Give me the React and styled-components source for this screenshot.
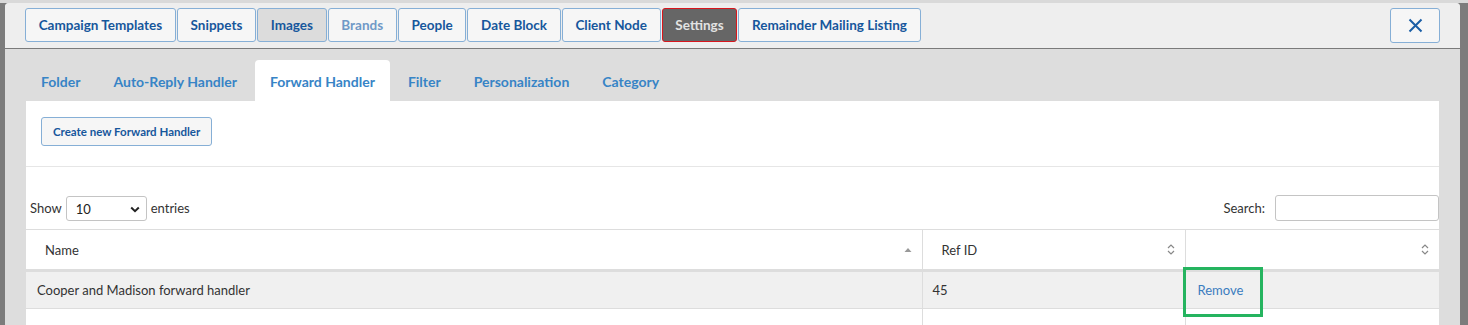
import React from 'react'
import styled, { createGlobalStyle } from 'styled-components'

const GlobalStyle = createGlobalStyle`
  html, body {
    margin: 0;
    padding: 0;
    background: #7c7c7c;
  }
  body {
    font-family: Lato, "Liberation Sans", sans-serif;
    font-size: 13px;
    color: #333;
  }
  * { box-sizing: border-box; }
`

const Backdrop = styled.div`
  height: 325px;
  padding: 3px 8px 0 5px;
  background: linear-gradient(#d9d9d9 0 3px, #7c7c7c 3px);
  overflow: hidden;
`

const Modal = styled.div`
  height: 100%;
  background: #dddddd;
  border-radius: 4px 4px 0 0;
  overflow: hidden;
`

const Header = styled.div`
  height: 46px;
  padding: 5px 20px 0 20px;
  display: flex;
  align-items: flex-start;
  background: #eeeeee;
  border-bottom: 1px solid #7a7a7a;
`

const TopTabs = styled.div`
  display: flex;
  gap: 1px;
  flex: 1;
`

const TopTab = styled.div`
  height: 34px;
  padding: 0 12.7px;
  display: flex;
  align-items: center;
  font-weight: 700;
  font-size: 13.5px;
  border-radius: 3px;
  border: 1px solid ${p => (p.$selected ? '#d8161d' : '#86afd6')};
  background: ${p => (p.$selected ? '#666666' : p.$active ? '#dcdcdc' : '#f6f6f6')};
  color: ${p => (p.$selected ? '#e2e2e2' : p.$disabled ? '#6f99c7' : '#16579c')};
`

const CloseButton = styled.div`
  width: 50px;
  height: 35px;
  border: 1px solid #86afd6;
  border-radius: 3px;
  background: #f6f6f6;
  display: flex;
  align-items: center;
  justify-content: center;
`

const Body = styled.div`
  padding: 11px 21px 0 21px;
`

const SubTabs = styled.div`
  display: flex;
  height: 41px;
`

const SubTab = styled.div`
  padding: 1px 15px 0 15px;
  margin-right: 3px;
  display: flex;
  align-items: center;
  font-weight: 700;
  font-size: 14px;
  color: #3784c6;
  border-radius: 4px 4px 0 0;
  background: ${p => (p.$active ? '#ffffff' : 'transparent')};
`

const Panel = styled.div`
  background: #ffffff;
  height: 240px;
`

const Toolbar = styled.div`
  padding: 16px 15px 20px 15px;
  border-bottom: 1px solid #e6e6e6;
`

const SmallButton = styled.div`
  display: inline-flex;
  align-items: center;
  height: 29px;
  padding: 0 11px;
  border: 1px solid #86afd6;
  border-radius: 3px;
  background: #f6f6f6;
  color: #16579c;
  font-weight: 700;
  font-size: 11.5px;
`

const Controls = styled.div`
  display: flex;
  justify-content: space-between;
  align-items: center;
  padding: 28px 0 8px 4px;
  color: #333;
`

const Label = styled.label`
  display: flex;
  align-items: center;
  gap: 4px;
`

const Select = styled.div`
  width: 81px;
  height: 25px;
  border: 1px solid #c4c4c4;
  border-radius: 3px;
  display: flex;
  align-items: center;
  justify-content: space-between;
  padding: 2px 6px 0 9px;
  color: #222;
`

const SearchInput = styled.div`
  width: 164px;
  height: 26px;
  border: 1px solid #c4c4c4;
  border-radius: 3px;
  margin-left: 6px;
`

const TableWrap = styled.div`
  position: relative;
`

const Table = styled.table`
  width: 100%;
  border-collapse: collapse;
  font-size: 13px;
`

const Th = styled.th`
  height: 41px;
  padding: 0 10px 0 ${p => p.$pad || 19}px;
  text-align: left;
  font-weight: 400;
  color: #333;
  border-top: 1px solid #dddddd;
  border-bottom: 3px solid #dddddd;
  border-left: ${p => (p.$first ? 'none' : '1px solid #dddddd')};
  width: ${p => p.$w || 'auto'};
`

const ThInner = styled.div`
  display: flex;
  align-items: center;
  justify-content: space-between;
`

const Td = styled.td`
  height: ${p => p.$h || 38}px;
  padding: 0 10px 0 ${p => p.$pad || 10}px;
  background: ${p => (p.$striped ? '#f0f0f0' : '#ffffff')};
  border-bottom: 1px solid #dddddd;
  border-left: ${p => (p.$first ? 'none' : '1px solid #dddddd')};
  color: #333;
`

const LinkText = styled.span`
  color: #3b7cbf;
`

const Highlight = styled.div`
  position: absolute;
  left: 1157px;
  top: 38px;
  width: 80px;
  height: 50px;
  border: 3px solid #25b45f;
  pointer-events: none;
`

const SortBoth = () => (
  <svg width="8" height="11" viewBox="0 0 8 11">
    <path d="M1 4 L4 1 L7 4 M1 7 L4 10 L7 7" fill="none" stroke="#888" strokeWidth="1.2" />
  </svg>
)

const SortUp = () => (
  <svg width="8" height="6" viewBox="0 0 8 6">
    <path d="M0.5 5 L4 1 L7.5 5 Z" fill="#999" />
  </svg>
)

const Chevron = () => (
  <svg width="10" height="7" viewBox="0 0 10 7">
    <path d="M1.2 1.5 L5 5.2 L8.8 1.5" fill="none" stroke="#222" strokeWidth="2" />
  </svg>
)

const CloseIcon = () => (
  <svg width="15" height="15" viewBox="0 0 15 15">
    <path d="M1.5 1.5 L13.5 13.5 M13.5 1.5 L1.5 13.5" stroke="#1a5ea6" strokeWidth="2" />
  </svg>
)

const topTabs = [
  { label: 'Campaign Templates' },
  { label: 'Snippets' },
  { label: 'Images', active: true },
  { label: 'Brands', disabled: true },
  { label: 'People' },
  { label: 'Date Block' },
  { label: 'Client Node' },
  { label: 'Settings', selected: true },
  { label: 'Remainder Mailing Listing' },
]

const subTabs = ['Folder', 'Auto-Reply Handler', 'Forward Handler', 'Filter', 'Personalization', 'Category']

export default function App() {
  return (
    <>
      <GlobalStyle />
      <Backdrop>
        <Modal>
          <Header>
            <TopTabs>
              {topTabs.map(t => (
                <TopTab key={t.label} $active={t.active} $disabled={t.disabled} $selected={t.selected}>
                  {t.label}
                </TopTab>
              ))}
            </TopTabs>
            <CloseButton>
              <CloseIcon />
            </CloseButton>
          </Header>
          <Body>
            <SubTabs>
              {subTabs.map(s => (
                <SubTab key={s} $active={s === 'Forward Handler'}>
                  {s}
                </SubTab>
              ))}
            </SubTabs>
            <Panel>
              <Toolbar>
                <SmallButton>Create new Forward Handler</SmallButton>
              </Toolbar>
              <Controls>
                <Label>
                  Show
                  <Select>
                    10
                    <Chevron />
                  </Select>
                  entries
                </Label>
                <Label>
                  Search:
                  <SearchInput />
                </Label>
              </Controls>
              <TableWrap>
                <Table>
                  <thead>
                    <tr>
                      <Th $first>
                        <ThInner>
                          Name
                          <SortUp />
                        </ThInner>
                      </Th>
                      <Th $w="263px">
                        <ThInner>
                          Ref ID
                          <SortBoth />
                        </ThInner>
                      </Th>
                      <Th $w="254px">
                        <ThInner>
                          <span />
                          <SortBoth />
                        </ThInner>
                      </Th>
                    </tr>
                  </thead>
                  <tbody>
                    <tr>
                      <Td $first $striped $pad={11}>Cooper and Madison forward handler</Td>
                      <Td $striped>45</Td>
                      <Td $striped $pad={12}>
                        <LinkText>Remove</LinkText>
                      </Td>
                    </tr>
                    <tr>
                      <Td $first $h={38} />
                      <Td />
                      <Td />
                    </tr>
                  </tbody>
                </Table>
                <Highlight />
              </TableWrap>
            </Panel>
          </Body>
        </Modal>
      </Backdrop>
    </>
  )
}
